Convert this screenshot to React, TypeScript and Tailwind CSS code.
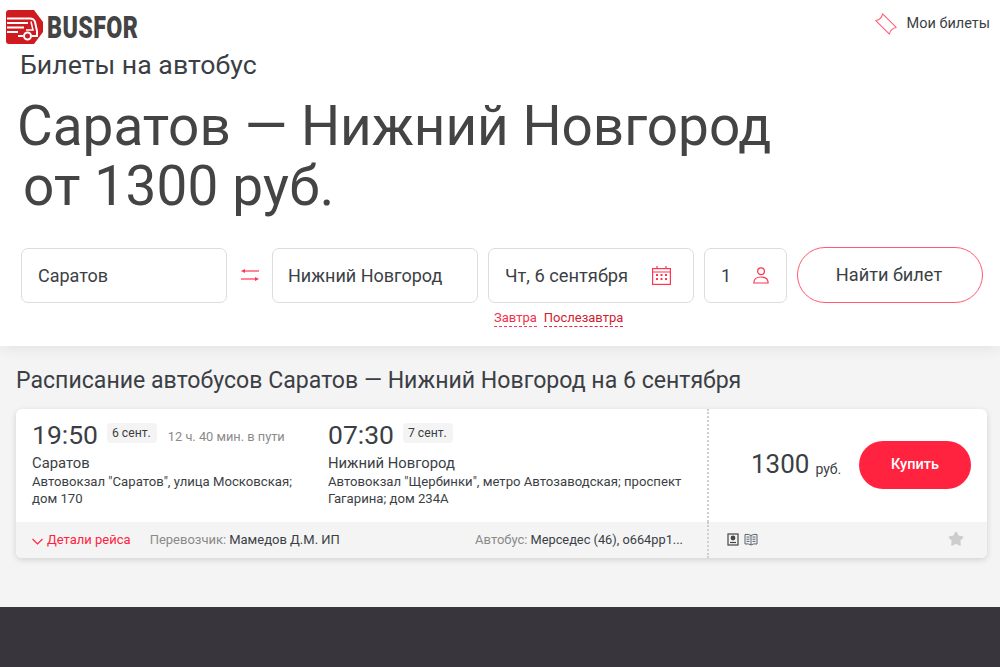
import { Star } from "lucide-react";

function Logo() {
  return (
    <div className="flex items-center">
      <svg width="39" height="36" viewBox="0 0 39 36" className="shrink-0">
        <path d="M3 1 H28 L37 13 V23 L28 35 H3 Q0 35 0 32 V4 Q0 1 3 1 Z" fill="#cf1a1f" />
        <path d="M1 9.5 H24 Q28 9.5 29 13 L31 22 V27 H26 M12 27 H17" stroke="#fff" strokeWidth="2" fill="none" />
        <path d="M1 14 H22 M1 18.5 H18 M1 23 H12" stroke="#fff" strokeWidth="2" fill="none" />
        <path d="M25 12.5 L27 21 H20" stroke="#fff" strokeWidth="1.5" fill="none" />
        <circle cx="21.5" cy="27" r="3.5" fill="#cf1a1f" stroke="#fff" strokeWidth="2" />
      </svg>
      <span className="ml-[2px] w-[92px] origin-left scale-x-[0.75] font-['Roboto'] text-[31px] leading-none font-black tracking-[0.5px] whitespace-nowrap text-[#444]">
        BUSFOR
      </span>
    </div>
  );
}

function Ticket() {
  return (
    <svg width="22" height="22" viewBox="-11 -11 22 22" fill="none" stroke="#ff5a70" strokeWidth="1.3">
      <path d="M-12 -6 H12 Q10 -3 10 0 Q10 3 12 6 H-12 Q-10 3 -10 0 Q-10 -3 -12 -6 Z" transform="rotate(45) scale(0.8)" strokeLinejoin="round" />
    </svg>
  );
}

function Swap() {
  return (
    <svg width="18" height="12" viewBox="0 0 18 12" fill="none" stroke="#ff3552" strokeWidth="1.2">
      <path d="M3 2 H18" />
      <path d="M0 2 L4 0 V4 Z" fill="#ff3552" stroke="none" />
      <path d="M0 10 H15" />
      <path d="M18 10 L14 8 V12 Z" fill="#ff3552" stroke="none" />
    </svg>
  );
}

function CalendarIcon() {
  return (
    <svg width="19" height="19" viewBox="0 0 19 19" fill="none" stroke="#ff3552" strokeWidth="1.2">
      <rect x="0.6" y="2.6" width="17.8" height="15.8" />
      <path d="M0.6 6 H18.4 M5 0 V3 M14 0 V3" />
      <g fill="#ff3552" stroke="none">
        <rect x="4" y="8" width="2" height="2" />
        <rect x="8.5" y="8" width="2" height="2" />
        <rect x="13" y="8" width="2" height="2" />
        <rect x="4" y="12" width="2" height="2" />
        <rect x="8.5" y="12" width="2" height="2" />
        <rect x="13" y="12" width="2" height="2" />
      </g>
    </svg>
  );
}

function PersonIcon() {
  return (
    <svg width="16" height="17" viewBox="0 0 16 17" fill="none" stroke="#ff3552" strokeWidth="1.2">
      <circle cx="8" cy="4.2" r="3.4" />
      <path d="M0.8 16 Q0.8 10 8 10 Q15.2 10 15.2 16 Z" strokeLinejoin="round" />
    </svg>
  );
}

function Field({ className, children }: { className: string; children: React.ReactNode }) {
  return (
    <div className={`flex h-[55px] items-center rounded-[7px] border border-[#dcdcdc] bg-white text-[#3b3f45] ${className}`}>
      {children}
    </div>
  );
}

function Stop({ time, date, city, address, width, extra }: { time: string; date: string; city: string; address: string; width: string; extra?: string }) {
  return (
    <div className={width}>
      <div className="flex h-[27px] items-start">
        <span className="mt-[-1px] text-[26.5px] leading-[27px] text-[#3b3f45]">{time}</span>
        <span className="mt-[1px] ml-[9px] rounded-[4px] bg-[#f4f4f4] py-[1px] pr-[6px] pl-[5px] text-[12.2px] leading-[18px] text-[#3b3f45]">{date}</span>
        {extra && <span className="mt-[6px] ml-[11px] text-[12.8px] leading-[17px] whitespace-nowrap text-[#8a8a8a]">{extra}</span>}
      </div>
      <div className="mt-[4px] text-[14.8px] leading-[20px] text-[#3b3f45]">{city}</div>
      <div className="text-[13.15px] leading-[17px] text-[#3b3f45]">{address}</div>
    </div>
  );
}

export default function App() {
  return (
    <div className="flex h-[667px] flex-col overflow-hidden bg-[#f4f4f4] font-['Roboto',sans-serif]">
      <section className="h-[346px] shrink-0 bg-white shadow-[0_2px_14px_rgba(0,0,0,0.08)]">
        <header className="flex h-[46px] items-start justify-between pt-[9px] pr-[10px] pl-[6px]">
          <Logo />
          <div className="mt-[4px] flex items-center gap-[10px] text-[14.5px] text-[#3b3f45]">
            <Ticket />
            <span>Мои билеты</span>
          </div>
        </header>
        <div className="pl-[20px] text-[26.7px] leading-[38px] text-[#3b3f45]">Билеты на автобус</div>
        <h1 className="mt-[12px] pl-[17px] text-[54.9px] leading-[60px] font-normal text-[#444]">
          <div>Саратов — Нижний Новгород</div>
          <div className="pl-[6px] tracking-[0.2px]">от 1300 руб.</div>
        </h1>
        <form className="mt-[31px] flex items-end pl-[21px]">
          <Field className="w-[206px] pl-[16px] text-[18px]">Саратов</Field>
          <div className="flex w-[45px] justify-center self-center"><Swap /></div>
          <Field className="w-[206px] pl-[15px] text-[18px]">Нижний Новгород</Field>
          <Field className="ml-[10px] w-[206px] justify-between pr-[22px] pl-[16px] text-[18.3px]">
            <span>Чт, 6 сентября</span>
            <CalendarIcon />
          </Field>
          <Field className="ml-[10px] w-[83px] justify-between pr-[17px] pl-[16px] text-[18px]">
            <span>1</span>
            <PersonIcon />
          </Field>
          <button type="button" className="ml-[10px] h-[56px] w-[186px] rounded-full border border-[#ff5a70] pr-[2px] text-[18.2px] text-[#3b3f45]">
            Найти билет
          </button>
        </form>
        <div className="mt-[7px] flex gap-[7px] pl-[494px] text-[13px] leading-[16px]">
          <span className="border-b border-dashed border-[#ff3552] text-[#f5304a]">Завтра</span>
          <span className="border-b border-dashed border-[#e8263f] text-[#d3222f]">Послезавтра</span>
        </div>
      </section>

      <main className="flex-1 pr-[13px] pl-[16px]">
        <h2 className="mt-[20px] text-[23.1px] leading-[30px] font-normal whitespace-nowrap text-[#3b3f45]">
          Расписание автобусов Саратов — Нижний Новгород на 6 сентября
        </h2>
        <article className="mt-[13px] overflow-hidden rounded-[6px] bg-white shadow-[0_2px_6px_rgba(0,0,0,0.14)]">
          <div className="flex h-[113px]">
            <div className="flex w-[691px] gap-[20px] pt-[13px] pl-[16px]">
              <Stop width="w-[276px]" time="19:50" date="6 сент." extra="12 ч. 40 мин. в пути" city="Саратов" address={'Автовокзал "Саратов", улица Московская; дом 170'} />
              <Stop width="w-[362px]" time="07:30" date="7 сент." city="Нижний Новгород" address={'Автовокзал "Щербинки", метро Автозаводская; проспект Гагарина; дом 234А'} />
            </div>
            <div className="flex flex-1 items-center border-l-2 border-dotted border-[#cfcfcf] pr-[16px] pl-[42px]">
              <span className="mb-[4px] text-[26px] leading-none text-[#3b3f45]">1300</span>
              <span className="mt-[7px] ml-[6px] text-[14px] text-[#3b3f45]">руб.</span>
              <button type="button" className="mb-[1px] ml-auto h-[48px] w-[112px] rounded-full bg-[#ff2340] text-[14.5px] font-medium text-white">
                Купить
              </button>
            </div>
          </div>
          <div className="flex h-[36px] bg-[#f4f4f4] text-[13px]">
            <div className="flex w-[691px] items-center pl-[16px]">
              <svg width="11" height="7" viewBox="0 0 11 7" fill="none" stroke="#ff2340" strokeWidth="1.1" className="mt-[3px]">
                <path d="M0.5 1 L5.5 6 L10.5 1" />
              </svg>
              <span className="ml-[4px] text-[#ff2340]">Детали рейса</span>
              <span className="ml-[19px] text-[#8a8a8a]">Перевозчик:</span>
              <span className="ml-[3px] text-[#3b3f45]">Мамедов Д.М. ИП</span>
              <span className="ml-auto text-[#8a8a8a]">Автобус:</span>
              <span className="mr-[24px] ml-[3px] text-[12.8px] text-[#3b3f45]">Мерседес (46), о664рр1...</span>
            </div>
            <div className="flex flex-1 items-center border-l-2 border-dotted border-[#cfcfcf] pr-[23px] pb-[2px] pl-[18px]">
              <svg width="12" height="13" viewBox="0 0 12 13" fill="none" stroke="#444" strokeWidth="1.2">
                <rect x="1" y="1" width="10" height="11" />
                <circle cx="6" cy="5" r="1.8" fill="#444" />
                <path d="M3 9.5 H9" />
              </svg>
              <svg className="ml-[5px]" width="14" height="13" viewBox="0 0 14 13" fill="none" stroke="#5b6470" strokeWidth="1">
                <path d="M7 2.5 Q4.5 0.8 1 1.5 V11 Q4.5 10.3 7 12 Q9.5 10.3 13 11 V1.5 Q9.5 0.8 7 2.5 V12" />
                <path d="M2.5 4 H5.5 M2.5 6.2 H5.5 M2.5 8.4 H5.5 M8.5 4 H11.5 M8.5 6.2 H11.5 M8.5 8.4 H11.5" />
              </svg>
              <Star size={16} className="ml-auto" fill="#cdcdcd" stroke="#cdcdcd" />
            </div>
          </div>
        </article>
      </main>

      <footer className="h-[60px] shrink-0 bg-[#38353d]" />
    </div>
  );
}
